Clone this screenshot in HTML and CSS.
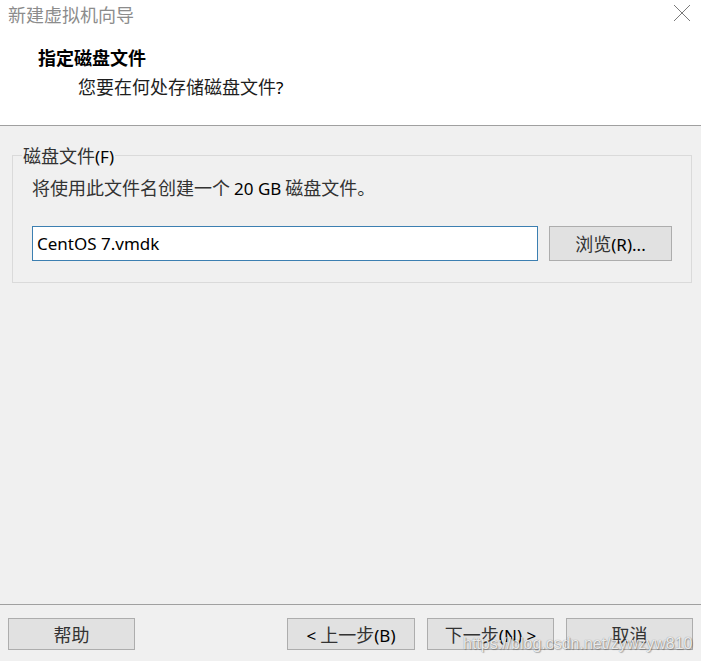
FILE: index.html
```html
<!DOCTYPE html>
<html lang="zh-CN">
<head>
<meta charset="utf-8">
<title>新建虚拟机向导</title>
<link rel="stylesheet" href="styles.css">
</head>
<body>
<div class="window">
  <header class="header">
    <div class="titlebar">
      <span class="title">新建虚拟机向导</span>
      <svg class="close" width="18" height="18" viewBox="0 0 18 18" aria-hidden="true">
        <path d="M1 1 L17 17 M17 1 L1 17" stroke="#7a7a7a" stroke-width="1" fill="none"/>
      </svg>
    </div>
    <h1 class="heading">指定磁盘文件</h1>
    <p class="subtitle">您要在何处存储磁盘文件<span class="latin">?</span></p>
  </header>
  <main class="main">
    <fieldset class="group">
      <legend class="legend">磁盘文件<span class="latin">(F)</span></legend>
      <p class="info">将使用此文件名创建一个 <span class="latin">20 GB</span> 磁盘文件。</p>
      <div class="file-row">
        <input class="file-input" type="text" value="CentOS 7.vmdk">
        <button class="btn browse">浏览<span class="latin">(R)...</span></button>
      </div>
    </fieldset>
  </main>
  <footer class="footer">
    <button class="btn">帮助</button>
    <div class="spacer"></div>
    <button class="btn back"><span class="latin">&lt;</span> 上一步<span class="latin">(B)</span></button>
    <button class="btn">下一步<span class="latin">(N) &gt;</span></button>
    <button class="btn">取消</button>
    <span class="watermark">https://blog.csdn.net/zywzyw810</span>
  </footer>
</div>
</body>
</html>
```

FILE: styles.css
```css
html, body {
  margin: 0;
  padding: 0;
}
body {
  width: 701px;
  height: 661px;
  overflow: hidden;
  background: #f0f0f0;
  font-family: "Noto Sans CJK SC", sans-serif;
  font-size: 18px;
  color: #2a2a2a;
}
.window {
  display: flex;
  flex-direction: column;
  height: 661px;
}
.latin {
  font-family: "Noto Sans", sans-serif;
  font-size: 17px;
  line-height: 1;
  color: #000;
}
.header {
  background: #ffffff;
  height: 125px;
  border-bottom: 1px solid #a0a0a0;
  box-sizing: content-box;
  display: flex;
  flex-direction: column;
}
.titlebar {
  display: flex;
  align-items: center;
  justify-content: space-between;
  height: 28px;
  padding: 0 10px 0 8px;
}
.title {
  font-size: 18px;
  line-height: 28px;
  color: #8c8c8c;
}
.close {
  display: block;
  margin-top: -2px;
}
.heading {
  margin: 17px 0 0 38px;
  font-size: 18px;
  font-weight: 700;
  line-height: 24px;
  height: 24px;
  color: #000;
}
.subtitle {
  margin: 5px 0 0 78px;
  font-size: 18px;
  line-height: 24px;
  height: 24px;
  color: #1e1e1e;
}
.main {
  flex: 1;
  padding: 18px 9px 0 12px;
}
.group {
  margin: 0;
  border: 1px solid #dadada;
  padding: 10px 19px 21px 19px;
  min-width: 0;
}
.legend {
  padding: 0 1px;
  margin-left: -10px;
  line-height: 22px;
  height: 22px;
  font-size: 18px;
  color: #333;
}
.info {
  margin: 0;
  line-height: 22px;
  height: 22px;
  color: #333;
}
.file-row {
  display: flex;
  gap: 11px;
  margin-top: 28px;
}
.file-input {
  flex: 1;
  height: 35px;
  box-sizing: border-box;
  border: 1px solid #3c7fb1;
  background: #ffffff;
  padding: 0 4px;
  font-family: "Noto Sans", sans-serif;
  font-size: 17px;
  color: #000;
  outline: none;
  margin: 0;
}
.btn {
  width: 127px;
  height: 32px;
  box-sizing: border-box;
  background: #e1e1e1;
  border: 1px solid #adadad;
  border-radius: 0;
  font-family: "Noto Sans CJK SC", sans-serif;
  font-size: 18px;
  color: #333;
  padding: 0;
  margin: 0;
  line-height: 1;
}
.browse {
  width: 123px;
  height: 35px;
}
.footer {
  position: relative;
  border-top: 1px solid #a0a0a0;
  display: flex;
  align-items: flex-start;
  gap: 12px;
  padding: 13px 8px 0 8px;
  box-sizing: border-box;
  height: 57px;
}
.back {
  width: 128px;
}
.spacer {
  flex: 1;
}
.watermark {
  position: absolute;
  left: 463px;
  top: 30px;
  font-family: "Liberation Sans", sans-serif;
  font-size: 16px;
  color: rgba(255, 255, 255, 0.85);
  text-shadow: 0 0 1px rgba(0, 0, 0, 0.45), 1px 1px 1px rgba(0, 0, 0, 0.25);
  pointer-events: none;
  white-space: nowrap;
}
```
